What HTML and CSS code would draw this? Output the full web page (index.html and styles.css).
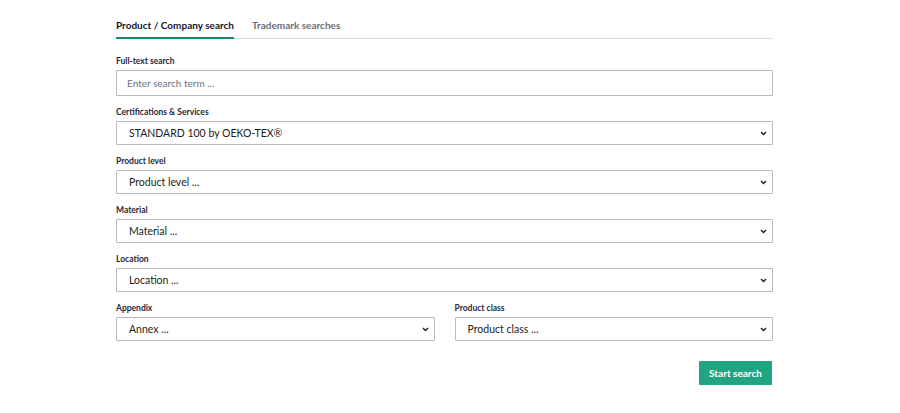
FILE: index.html
```html
<!DOCTYPE html>
<html lang="en">
<head>
<meta charset="utf-8">
<title>Search</title>
<link rel="stylesheet" href="styles.css">
</head>
<body>
<div class="wrap">
  <div class="tabs">
    <div class="tab active">Product / Company search</div>
    <div class="tab">Trademark searches</div>
  </div>
  <form class="form">
    <div class="field">
      <label class="label">Full-text search</label>
      <input class="input" type="text" placeholder="Enter search term ...">
    </div>
    <div class="field">
      <label class="label">Certifications &amp; Services</label>
      <select class="select"><option>STANDARD 100 by OEKO-TEX®</option></select>
    </div>
    <div class="field">
      <label class="label">Product level</label>
      <select class="select"><option>Product level ...</option></select>
    </div>
    <div class="field">
      <label class="label">Material</label>
      <select class="select"><option>Material ...</option></select>
    </div>
    <div class="field">
      <label class="label">Location</label>
      <select class="select"><option>Location ...</option></select>
    </div>
    <div class="row">
      <div class="field">
        <label class="label">Appendix</label>
        <select class="select"><option>Annex ...</option></select>
      </div>
      <div class="field">
        <label class="label">Product class</label>
        <select class="select"><option>Product class ...</option></select>
      </div>
    </div>
    <div class="actions">
      <button type="button" class="btn">Start search</button>
    </div>
  </form>
</div>
</body>
</html>
```
FILE: styles.css
```css
html, body {
  margin: 0;
  padding: 0;
  background: #fff;
}
body {
  font-family: Lato, "Open Sans", sans-serif;
  color: #1e1f2b;
}
.wrap {
  width: 657px;
  margin-left: 116px;
  padding-top: 18px;
}
.tabs {
  display: flex;
  gap: 18px;
  border-bottom: 1px solid #dcdde0;
}
.tab {
  font-size: 10px;
  font-weight: 700;
  line-height: 14px;
  padding-bottom: 5px;
  color: #6b6e78;
  border-bottom: 2px solid transparent;
  margin-bottom: -1px;
}
.tab.active {
  color: #14151f;
  border-bottom-color: #1b8a6b;
}
.form {
  margin-top: 16px;
  display: flex;
  flex-direction: column;
}
.field {
  display: flex;
  flex-direction: column;
  margin-bottom: 10px;
  flex: 1;
}
.label {
  font-size: 8.5px;
  font-weight: 700;
  line-height: 12px;
  margin-bottom: 3px;
  color: #272838;
}
.input, .select {
  box-sizing: border-box;
  width: 100%;
  border: 1px solid #b9b9bd;
  border-radius: 1px;
  background-color: #fff;
  font-family: Lato, "Open Sans", sans-serif;
  font-size: 10px;
  color: #1b1b1b;
  margin: 0;
  outline: none;
}
.input {
  height: 26px;
  padding: 0 10px;
}
.input::placeholder {
  color: #6f7078;
}
.select {
  -webkit-appearance: none;
  appearance: none;
  height: 24px;
  padding: 0 20px 0 12px;
  font-size: 10.5px;
  background-image: url("data:image/svg+xml,%3Csvg xmlns='http://www.w3.org/2000/svg' width='7' height='5' viewBox='0 0 7 5'%3E%3Cpath d='M1 1l2.5 2.5L6 1' fill='none' stroke='%23222' stroke-width='1.5'/%3E%3C/svg%3E");
  background-repeat: no-repeat;
  background-position: right 5px center;
  background-size: 7px 5px;
}
.row {
  display: flex;
  gap: 20px;
}
.actions {
  display: flex;
  justify-content: flex-end;
  margin-top: 10px;
}
.btn {
  background: #22a381;
  color: #fff;
  border: none;
  border-radius: 1px;
  font-family: Lato, "Open Sans", sans-serif;
  font-weight: 700;
  font-size: 10px;
  height: 24px;
  width: 73px;
  padding: 0;
  margin-right: 1px;
}
```
